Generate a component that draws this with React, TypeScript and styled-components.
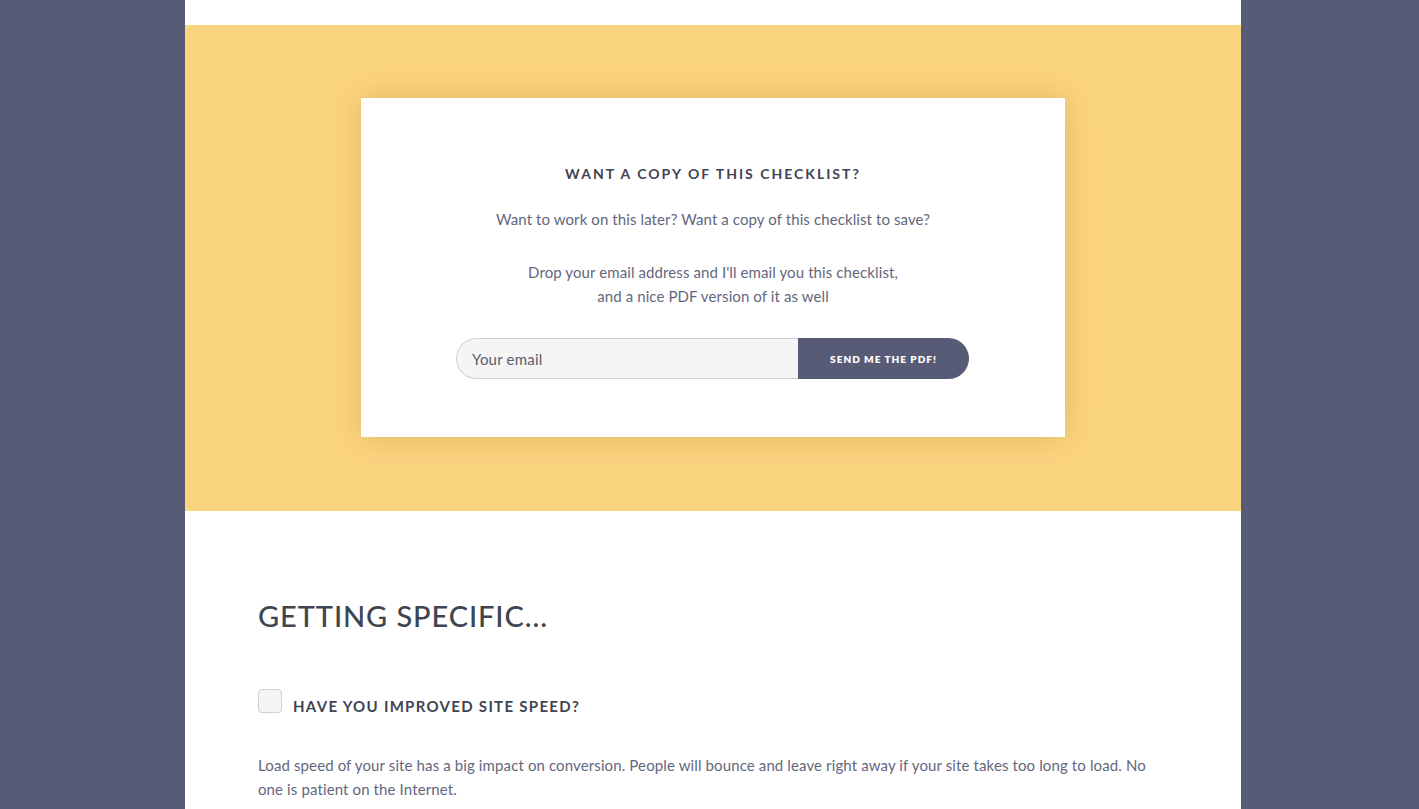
import React from "react";
import styled, { createGlobalStyle } from "styled-components";

const Global = createGlobalStyle`
  html, body { margin: 0; padding: 0; }
  body {
    background: #575b75;
    font-family: Lato, "Open Sans", "Liberation Sans", sans-serif;
    overflow: hidden;
  }
`;

const Page = styled.div`
  width: 1056px;
  margin-left: 185px;
  background: #ffffff;
  min-height: 809px;
  padding-top: 25px;
  box-sizing: border-box;
`;

const Band = styled.section`
  background: #fbd480;
  padding: 73px 0 74px;
  display: flex;
  justify-content: center;
`;

const Card = styled.div`
  width: 704px;
  height: 339px;
  box-sizing: border-box;
  background: #ffffff;
  box-shadow: 0 0 28px rgba(150, 110, 20, 0.26);
  padding-top: 66px;
  display: flex;
  flex-direction: column;
  align-items: center;
  text-align: center;
`;

const CardTitle = styled.h3`
  margin: 0;
  font-size: 14px;
  line-height: 20px;
  font-weight: 700;
  letter-spacing: 2px;
  color: #3f4452;
  text-transform: uppercase;
`;

const CardText = styled.p<{ $gap: number }>`
  margin: ${(p) => p.$gap}px 0 0;
  font-size: 15px;
  line-height: 24px;
  font-weight: 400;
  letter-spacing: 0.1px;
  color: #63677d;
`;

const Form = styled.form`
  margin: 30px 1px 0 0;
  display: flex;
  width: 513px;
  height: 41px;
`;

const EmailInput = styled.input`
  width: 342px;
  height: 41px;
  box-sizing: border-box;
  border: 1px solid #cfd1d1;
  border-right: none;
  border-radius: 21px 0 0 21px;
  background: #f4f5f4;
  padding: 0 0 0 15px;
  font-family: Lato, "Open Sans", "Liberation Sans", sans-serif;
  font-size: 15px;
  font-weight: 400;
  letter-spacing: 0.2px;
  color: #575b75;
  outline: none;
  &::placeholder { color: #5a5e6e; opacity: 1; }
`;

const SendButton = styled.button`
  width: 171px;
  height: 41px;
  border: none;
  border-radius: 0 21px 21px 0;
  background: #575b75;
  color: #ffffff;
  font-family: Lato, "Open Sans", "Liberation Sans", sans-serif;
  font-size: 10px;
  font-weight: 800;
  letter-spacing: 1px;
  text-transform: uppercase;
  cursor: pointer;
  padding: 0;
`;

const Content = styled.section`
  padding: 88px 73px 0;
`;

const SectionTitle = styled.h2`
  margin: 0;
  font-size: 29px;
  line-height: 34px;
  font-weight: 500;
  letter-spacing: 0.9px;
  color: #3f4452;
  text-transform: uppercase;
`;

const ItemRow = styled.label`
  margin-top: 56px;
  display: flex;
  align-items: flex-start;
  gap: 11px;
`;

const Check = styled.input.attrs({ type: "checkbox" })`
  appearance: none;
  margin: 0;
  width: 24px;
  height: 24px;
  box-sizing: border-box;
  border: 1px solid #cdd0d0;
  border-radius: 4px;
  background: #f4f5f4;
  flex: none;
`;

const ItemTitle = styled.h4`
  margin: 7px 0 0;
  font-size: 15px;
  line-height: 20px;
  font-weight: 700;
  letter-spacing: 1.3px;
  color: #3f4452;
  text-transform: uppercase;
`;

const Body = styled.p`
  margin: 37px 0 0;
  font-size: 15px;
  line-height: 24px;
  font-weight: 400;
  letter-spacing: 0.12px;
  color: #63677d;
`;

export default function App() {
  return (
    <>
      <Global />
      <Page>
        <Band>
          <Card>
            <CardTitle>Want a copy of this checklist?</CardTitle>
            <CardText $gap={23}>
              Want to work on this later? Want a copy of this checklist to save?
            </CardText>
            <CardText $gap={29}>
              Drop your email address and I'll email you this checklist,
              <br />
              and a nice PDF version of it as well
            </CardText>
            <Form onSubmit={(e) => e.preventDefault()}>
              <EmailInput type="email" placeholder="Your email" />
              <SendButton type="submit">Send me the PDF!</SendButton>
            </Form>
          </Card>
        </Band>
        <Content>
          <SectionTitle>Getting specific...</SectionTitle>
          <ItemRow>
            <Check />
            <ItemTitle>Have you improved site speed?</ItemTitle>
          </ItemRow>
          <Body>
            Load speed of your site has a big impact on conversion. People will
            bounce and leave right away if your site takes too long to load. No
            one is patient on the Internet.
          </Body>
        </Content>
      </Page>
    </>
  );
}
